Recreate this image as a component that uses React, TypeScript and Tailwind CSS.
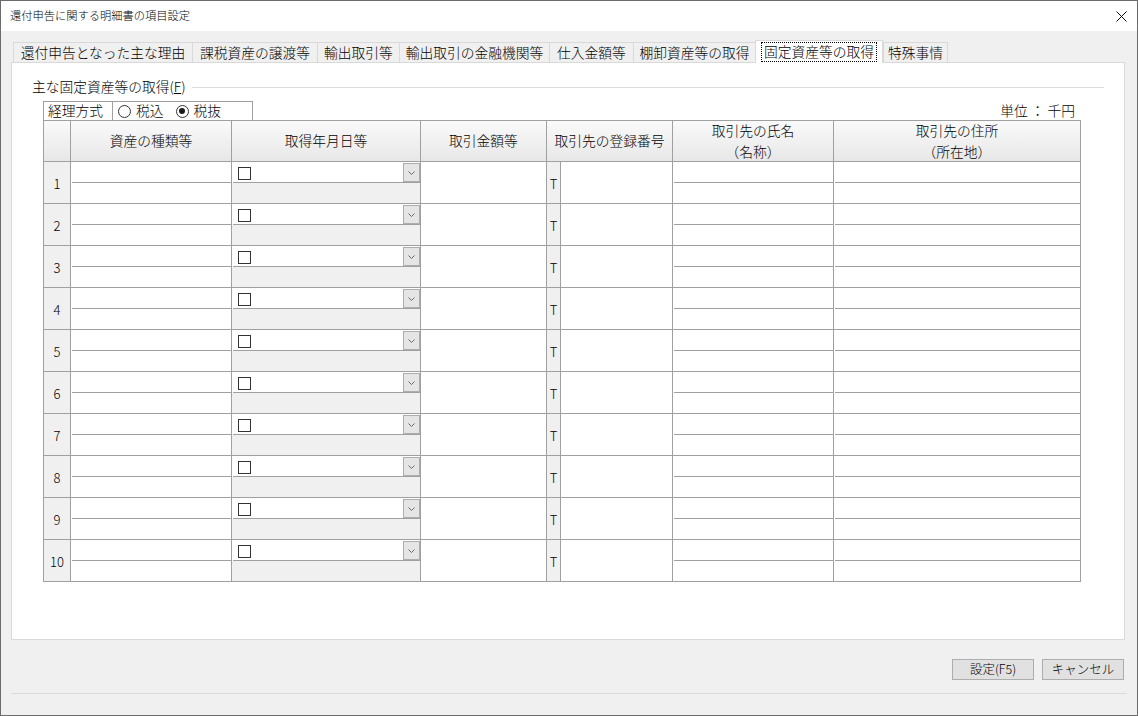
import React from "react";

const cols = "grid grid-cols-[27px_161px_189px_126px_126px_161px_247px]";
const line = "border-[#a0a0a0]";

const tabs = [
  { label: "還付申告となった主な理由", w: "w-[179px]" },
  { label: "課税資産の譲渡等", w: "w-[125px]" },
  { label: "輸出取引等", w: "w-[82px]" },
  { label: "輸出取引の金融機関等", w: "w-[150px]" },
  { label: "仕入金額等", w: "w-[84px]" },
  { label: "棚卸資産等の取得", w: "w-[122px]" },
  { label: "固定資産等の取得", w: "w-[128px]", active: true },
  { label: "特殊事情", w: "w-[65px]", last: true },
];

const SplitCell = () => (
  <div className={`flex flex-col border-r border-b ${line} bg-white`}>
    <div className={`h-[21px] ml-[1px] border-b ${line}`} />
    <div className="flex-1" />
  </div>
);

const DateCell = () => (
  <div className={`flex flex-col border-r border-b ${line} bg-white`}>
    <div className={`relative h-[21px] ml-[1px] border-b ${line}`}>
      <span className="absolute left-[5px] top-[5px] w-[13px] h-[13px] border border-[#333333] bg-white" />
      <span className="absolute right-0 top-[1px] w-[17px] h-[19px] border border-[#adadad] bg-[#e5e5e5] flex items-center justify-center">
        <svg width="7" height="4" viewBox="0 0 7 4">
          <polyline points="0.5,0.5 3.5,3.5 6.5,0.5" fill="none" stroke="#6a6a6a" strokeWidth="1" />
        </svg>
      </span>
    </div>
    <div className="flex-1 bg-[#f0f0f0]" />
  </div>
);

const Row = ({ n }: { n: number }) => (
  <div className={`${cols} h-[42px]`}>
    <div className={`border-r border-b ${line} bg-[#f0f0f0] flex items-center justify-center text-[13px] leading-none pt-[1px]`}>
      {n}
    </div>
    <SplitCell />
    <DateCell />
    <div className={`border-r border-b ${line} bg-white`} />
    <div className={`flex border-r border-b ${line} bg-white`}>
      <div className={`w-[14px] border-r ${line} bg-[#f0f0f0] flex items-center justify-center text-[13px] leading-none pt-[2px]`}>
        T
      </div>
    </div>
    <SplitCell />
    <SplitCell />
  </div>
);

const Radio = ({ checked, label }: { checked?: boolean; label: string }) => (
  <div className="flex items-center gap-[5px]">
    <span className="w-[13px] h-[13px] rounded-full border border-[#333333] bg-white flex items-center justify-center">
      {checked && <span className="w-[6px] h-[6px] rounded-full bg-[#1a1a1a]" />}
    </span>
    <span>{label}</span>
  </div>
);

export default function App() {
  return (
    <div className="w-[1138px] h-[716px] overflow-hidden border border-[#6b6b6b] bg-[#f0f0f0] text-black font-light font-['Noto_Sans_CJK_JP',sans-serif]">
      {/* title bar */}
      <div className="h-[30px] bg-white flex items-center justify-between pl-[9px] pr-[9px]">
        <span className="text-[11.25px] leading-none">還付申告に関する明細書の項目設定</span>
        <svg width="11" height="11" viewBox="0 0 11 11" className="mr-[1px]">
          <line x1="0.5" y1="0.5" x2="10.5" y2="10.5" stroke="#111" strokeWidth="1" />
          <line x1="10.5" y1="0.5" x2="0.5" y2="10.5" stroke="#111" strokeWidth="1" />
        </svg>
      </div>

      <div className="pt-[9px]">
        {/* tabs */}
        <div className="ml-[12px] h-[22px] flex items-end text-[13.75px] leading-none">
          {tabs.map((t) =>
            t.active ? (
              <div
                key={t.label}
                className={`${t.w} relative z-10 -mb-px h-[23px] bg-white border-l border-t border-r border-[#d9d9d9] flex items-center justify-center`}
              >
                <span className="border border-dotted border-black px-[2px] py-[2px]">{t.label}</span>
              </div>
            ) : (
              <div
                key={t.label}
                className={`${t.w} h-[20px] bg-[#f0f0f0] border-l border-t border-[#d9d9d9] ${t.last ? "border-r" : ""} flex items-center justify-center pt-[1px]`}
              >
                {t.label}
              </div>
            )
          )}
        </div>

        {/* panel */}
        <div className="ml-[10px] w-[1114px] h-[578px] bg-white border border-[#d9d9d9] pt-[16px] pl-[20px] pr-[20px] text-[13.75px] leading-none">
          <div className="h-[16px] flex items-center gap-[6px]">
            <span>
              主な固定資産等の取得(<span className="underline">F</span>)
            </span>
            <div className="flex-1 h-px bg-[#dcdcdc]" />
          </div>

          <div className="ml-[11px] w-[1038px]">
            <div className="mt-[6px] h-[19px] flex items-stretch">
              <div className={`w-[70px] border-l border-t border-r ${line} flex items-center pl-[4px]`}>経理方式</div>
              <div className={`w-[140px] border-t border-r ${line} flex items-center gap-[12px] pl-[5px]`}>
                <Radio label="税込" />
                <Radio checked label="税抜" />
              </div>
              <div className="flex-1 flex items-center justify-end pr-[6px]">単位 ： 千円</div>
            </div>

            <div className={`border-l border-t ${line}`}>
              <div className={`${cols} h-[41px] bg-linear-to-b from-[#fafafa] to-[#e7e7e7]`}>
                <div className={`border-r border-b ${line}`} />
                <div className={`border-r border-b ${line} flex items-center justify-center`}>資産の種類等</div>
                <div className={`border-r border-b ${line} flex items-center justify-center`}>取得年月日等</div>
                <div className={`border-r border-b ${line} flex items-center justify-center`}>取引金額等</div>
                <div className={`border-r border-b ${line} flex items-center justify-center`}>取引先の登録番号</div>
                <div className={`border-r border-b ${line} flex flex-col items-center justify-center gap-[7px]`}>
                  <span>取引先の氏名</span>
                  <span>（名称）</span>
                </div>
                <div className={`border-r border-b ${line} flex flex-col items-center justify-center gap-[7px]`}>
                  <span>取引先の住所</span>
                  <span>（所在地）</span>
                </div>
              </div>
              {[1, 2, 3, 4, 5, 6, 7, 8, 9, 10].map((n) => (
                <Row key={n} n={n} />
              ))}
            </div>
          </div>
        </div>

        {/* buttons */}
        <div className="mt-[19px] pr-[13px] flex justify-end gap-[8px] text-[12.5px] leading-none">
          <button className="w-[82px] h-[21px] bg-[#e1e1e1] border border-[#adadad] flex items-center justify-center">
            設定(F5)
          </button>
          <button className="w-[82px] h-[21px] bg-[#e1e1e1] border border-[#adadad] flex items-center justify-center">
            キャンセル
          </button>
        </div>
        <div className="mt-[13px] ml-[10px] w-[1116px] h-px bg-[#dadada]" />
      </div>
    </div>
  );
}
